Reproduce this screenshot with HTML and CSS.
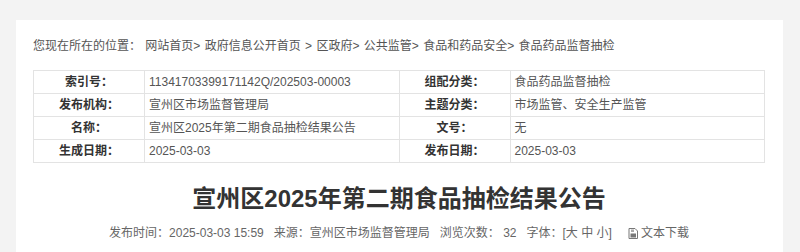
FILE: index.html
```html
<!DOCTYPE html>
<html lang="zh-CN">
<head>
  <meta charset="UTF-8">
  <title>宣州区2025年第二期食品抽检结果公告</title>
  <link rel="stylesheet" href="styles.css">
</head>
<body>
  <div class="wrap">
    <div class="panel">
      <!-- 位置导航 -->
      <div class="crumb">
        您现在所在的位置：
        <a href="#">网站首页</a>&gt;
        <a href="#">政府信息公开首页</a> &gt;
        <a href="#">区政府</a>&gt;
        <a href="#">公共监管</a>&gt;
        <a href="#">食品和药品安全</a>&gt;
        <a href="#">食品药品监督抽检</a>
      </div>

      <table class="info">
        <tr>
          <th>索引号：</th>
          <td>11341703399171142Q/202503-00003</td>
          <th>组配分类：</th>
          <td>食品药品监督抽检</td>
        </tr>
        <tr>
          <th>发布机构：</th>
          <td>宣州区市场监督管理局</td>
          <th>主题分类：</th>
          <td>市场监管、安全生产监管</td>
        </tr>
        <tr>
          <th>名称：</th>
          <td>宣州区2025年第二期食品抽检结果公告</td>
          <th>文号：</th>
          <td>无</td>
        </tr>
        <tr>
          <th>生成日期：</th>
          <td>2025-03-03</td>
          <th>发布日期：</th>
          <td>2025-03-03</td>
        </tr>
      </table>

      <h1 class="title">宣州区2025年第二期食品抽检结果公告</h1>

      <div class="meta">
        <span>发布时间：2025-03-03 15:59</span>
        <span>来源：宣州区市场监督管理局</span>
        <span>浏览次数： 32</span>
        <span>字体：[<a href="#">大</a> <a href="#">中</a> <a href="#">小</a>]</span>
        <a href="#" class="down">
          <svg viewBox="0 0 10 11" width="10" height="11">
            <path d="M1 0.5h6l2.5 2.5v7.5h-8.5z" fill="#fff" stroke="#777"/>
            <rect x="2.5" y="5.5" width="5.5" height="4" fill="#777"/>
            <rect x="3" y="1.5" width="3" height="2.5" fill="#aaa"/>
          </svg>
          文本下载
        </a>
      </div>
    </div>
  </div>
</body>
</html>
```

FILE: styles.css
```css
body {
  margin: 0;
  background: #f3f3f3;
  font-family: "Liberation Sans", "Noto Sans CJK SC", sans-serif;
  font-size: 12px;
  color: #555;
}

a {
  color: inherit;
  text-decoration: none;
}

.wrap {
  padding: 20px 17px 0 16px;
}

/* 白色内容区 */
.panel {
  background: #fff;
  padding: 16px 18px 20px 17px;
  min-height: 220px;
}

.crumb {
  line-height: 20px;
  color: #555;
  word-spacing: 1px;
}

/* 信息表格 */
.info {
  width: 100%;
  margin-top: 14px;
  border-collapse: collapse;
  table-layout: fixed;
}

.info th,
.info td {
  border: 1px solid #e3e3e3;
  height: 22px;
  padding: 0;
  line-height: 20px;
}

.info th {
  width: 110px;
  font-weight: bold;
  color: #333;
  text-align: center;
}

.info td {
  padding-left: 4px;
  color: #555;
}

.title {
  margin: 19px 0 0;
  text-align: center;
  font-size: 24px;
  line-height: 34px;
  font-weight: bold;
  color: #333;
}

.meta {
  margin-top: 7px;
  display: flex;
  justify-content: center;
  align-items: center;
  gap: 10px;
  line-height: 20px;
  color: #666;
}

.meta .down {
  margin-left: 6px;
  display: flex;
  align-items: center;
  gap: 3px;
}
```
